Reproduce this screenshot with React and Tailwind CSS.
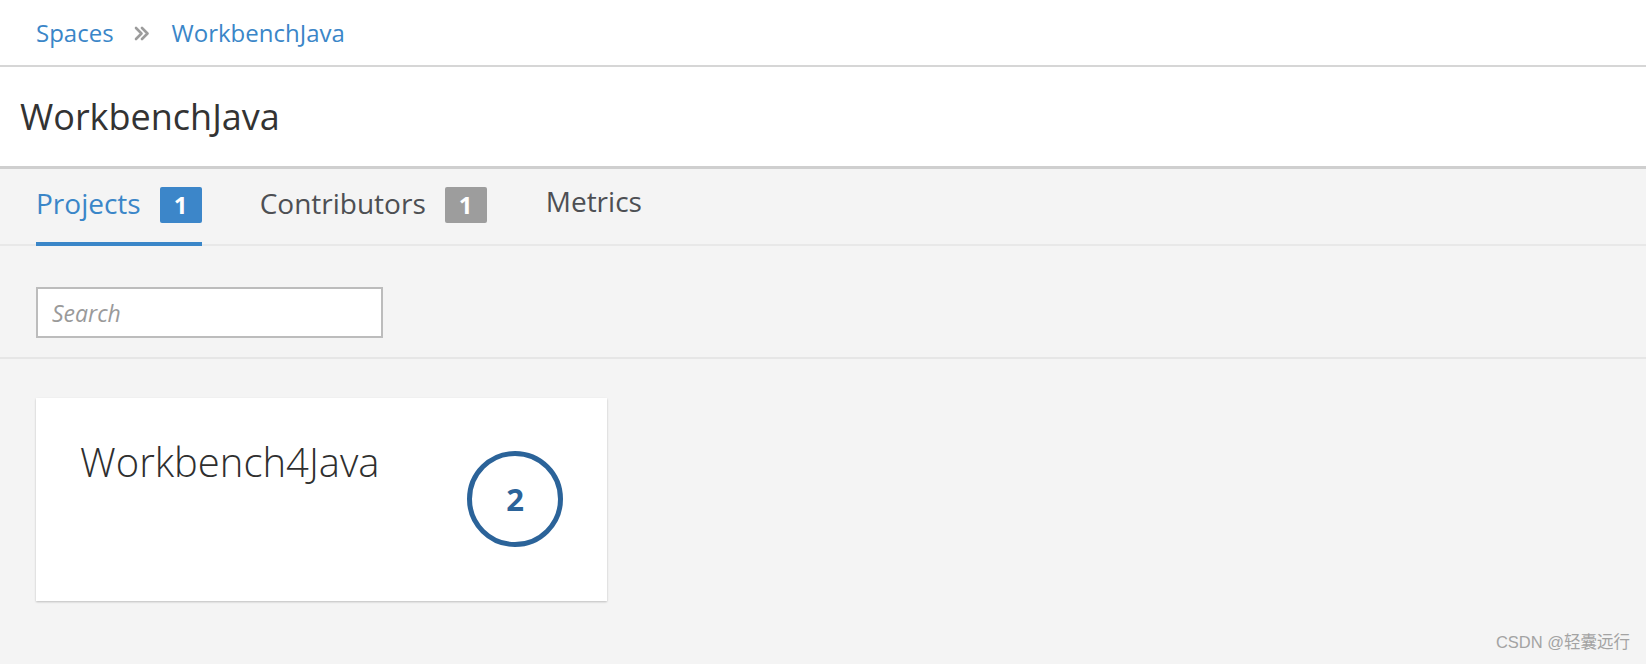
export default function App() {
  return (
    <div className="relative min-h-screen bg-[#f4f4f4] font-['Open_Sans',sans-serif]">
      {/* breadcrumb */}
      <div className="flex h-[67px] items-center border-b-2 border-[#d6d6d6] bg-white pl-9 text-[24px] text-[#3a86c8]">
        <span>Spaces</span>
        <svg className="ml-[20px] mr-[23px] mt-[2px]" width="15" height="15" viewBox="0 0 15 15" fill="none" stroke="#9c9c9c" strokeWidth="2.6" strokeLinecap="round" strokeLinejoin="round">
          <path d="M2 2l5.5 5.5L2 13" />
          <path d="M8 2l5.5 5.5L8 13" />
        </svg>
        <span>WorkbenchJava</span>
      </div>

      {/* page title */}
      <div className="flex h-[102px] items-center border-b-[3px] border-[#cfcfcf] bg-white pl-5 text-[36px] text-[#333]">
        WorkbenchJava
      </div>

      {/* tabs */}
      <div className="flex h-[77px] border-b-2 border-[#e8e8e8] px-9">
        <div className="-mb-[2px] flex items-start gap-[19px] border-b-4 border-[#3a86c8] pt-[18px]">
          <span className="-mt-[2px] text-[28px] leading-9 text-[#3a86c8]">Projects</span>
          <span className="flex h-9 w-[42px] items-center justify-center rounded-[2px] bg-[#3c86c9] text-[24px] font-bold text-white">
            1
          </span>
        </div>
        <div className="ml-[58px] flex items-start gap-[19px] pt-[18px]">
          <span className="-mt-[2px] text-[28px] leading-9 text-[#4d4f53]">Contributors</span>
          <span className="flex h-9 w-[42px] items-center justify-center rounded-[2px] bg-[#9d9d9d] text-[24px] font-bold text-white">
            1
          </span>
        </div>
        <div className="ml-[59px] pt-[14px]">
          <span className="text-[28px] leading-9 text-[#4d4f53]">Metrics</span>
        </div>
      </div>

      {/* search */}
      <div className="border-b-2 border-[#e6e6e6] px-9 pb-[19px] pt-[41px]">
        <input
          placeholder="Search"
          className="h-[51px] w-[347px] border-2 border-[#bcbcbc] bg-white px-[14px] text-[23px] placeholder:italic placeholder:text-[#9a9a9a] focus:outline-none"
        />
      </div>

      {/* project cards */}
      <div className="px-9 pt-[39px]">
        <div className="flex h-[203px] w-[571px] justify-between bg-white px-11 shadow-[0_1px_2px_rgba(0,0,0,0.22)]">
          <div className="pt-[38px] text-[40px] font-light leading-[52px] text-[#2f2f2f]">Workbench4Java</div>
          <div className="mt-[53px] flex h-[96px] w-[96px] items-center justify-center rounded-full border-[5px] border-[#2b6399] text-[31px] font-bold text-[#2b6399]">
            2
          </div>
        </div>
      </div>

      <div className="absolute bottom-[9px] right-[16px] font-['Liberation_Sans','Noto_Sans_CJK_SC',sans-serif] text-[16.5px] text-[#a3a3a3]">
        CSDN @轻囊远行
      </div>
    </div>
  );
}
